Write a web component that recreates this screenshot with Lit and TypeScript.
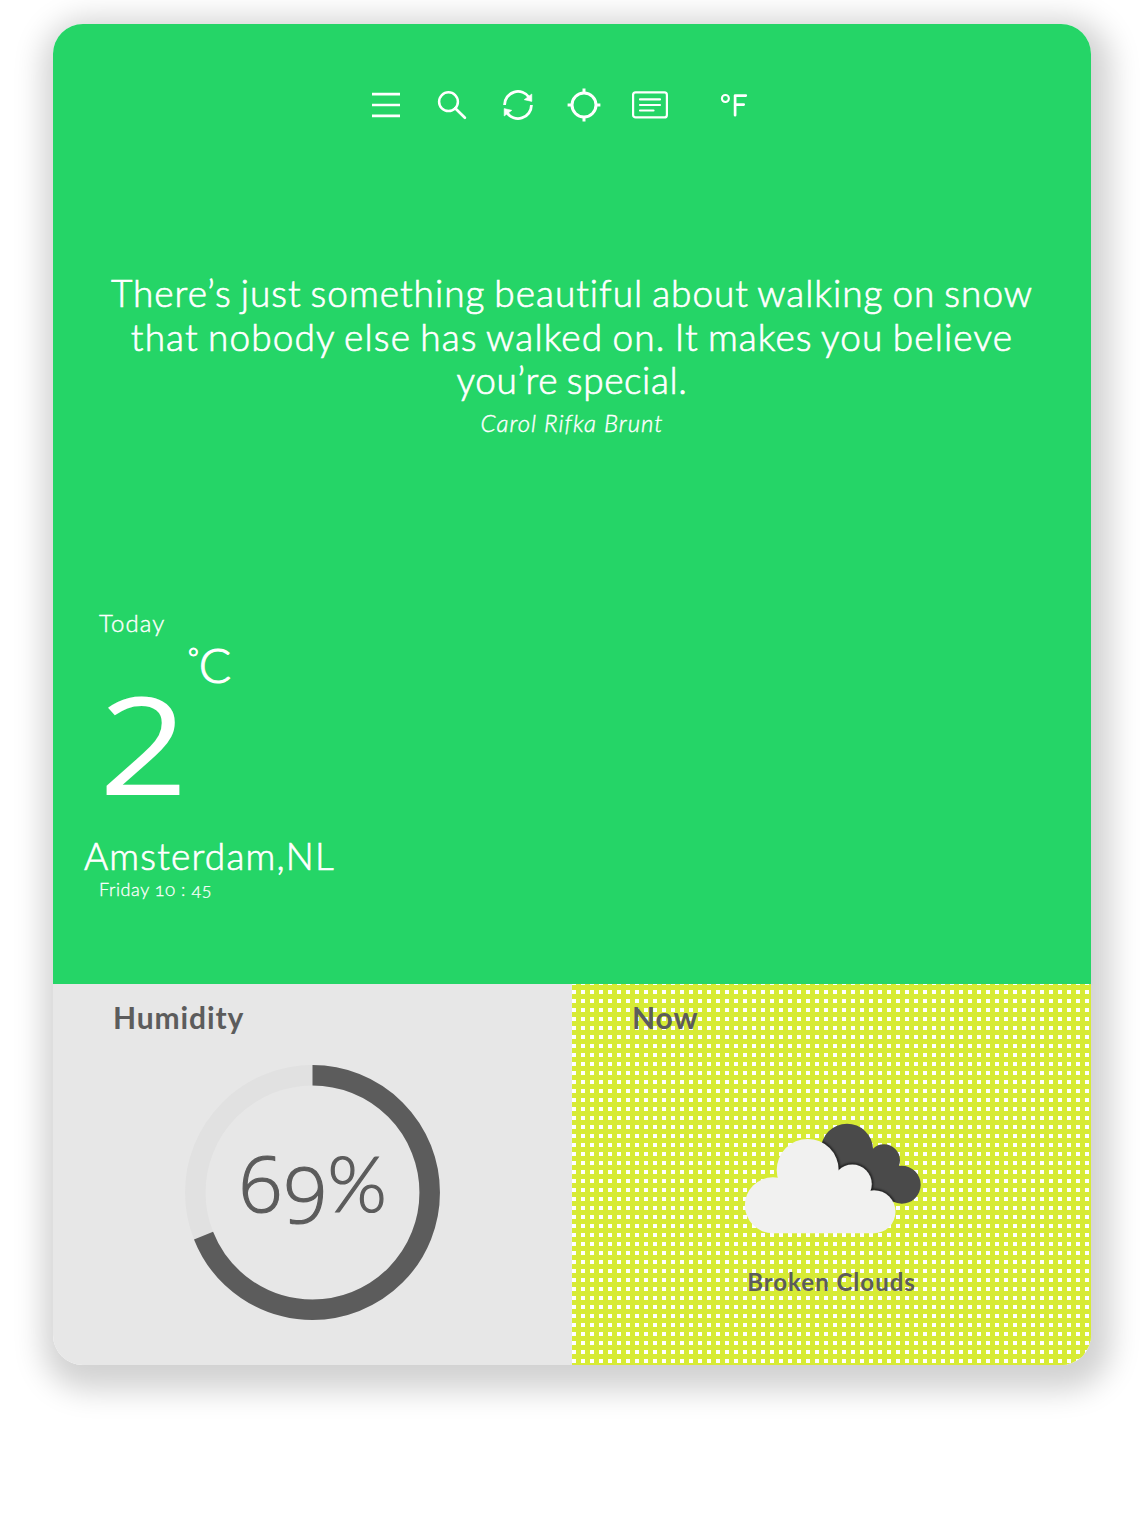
import { LitElement, html, css, svg } from "lit";
import { customElement, property } from "lit/decorators.js";

@customElement("humidity-ring")
class HumidityRing extends LitElement {
  @property({ type: Number }) value = 0;
  static styles = css`
    :host { display: grid; width: 256px; height: 256px; place-items: center; }
    svg, .label { grid-area: 1 / 1; }
    .label {
      display: flex; align-items: baseline; color: #5c5c5c; margin: -44px 0 0 -1px;
      font: 300 78px/78px "Open Sans", sans-serif; -webkit-text-stroke: 1.2px #5c5c5c;
    }
    .low { padding-top: 22px; margin-bottom: -22px; transform: translateY(11px); }
    .pct { font: 300 76px/78px Lato, sans-serif; -webkit-text-stroke: 1.2px #5c5c5c; }
  `;
  render() {
    const digits = String(this.value).split("");
    return html`
      <svg width="256" height="256" viewBox="0 0 256 256" fill="none" stroke-width="20.5">
        <circle cx="127.5" cy="127.5" r="117.2" stroke="#e1e1e1" />
        <circle cx="127.5" cy="127.5" r="117.2" stroke="#5c5c5c" pathLength="100"
          stroke-dasharray="${this.value} 100" transform="rotate(-90 127.5 127.5)" />
      </svg>
      <div class="label">${digits.map((d) => html`<span class=${"34579".includes(d) ? "low" : ""}>${d}</span>`)}<span class="pct">%</span></div>`;
  }
}

const icons = [
  svg`<path d="M6 9.2h28M6 20h28M6 30.9h28" stroke-width="2.7"/>`,
  svg`<circle cx="16.5" cy="16.7" r="9.4" stroke-width="2.5"/><path d="M23.2 23.3L32.9 32.7" stroke-width="2.7" stroke-linecap="round"/>`,
  svg`<path d="M6.6 20a13.4 13.4 0 0 1 24.6-7.5M33.4 20a13.4 13.4 0 0 1-24.6 7.5" stroke-width="2.8"/><path d="M33.8 9v7.4l-7.6-1.7zM6.2 31v-7.4l7.6 1.7z" fill="#fff" stroke-width="0.6"/>`,
  svg`<circle cx="20" cy="20" r="12" stroke-width="3"/><path d="M20 3.6v5M20 31.4v5M3.6 20h5M31.4 20h5" stroke-width="3"/>`,
  svg`<rect x="3.1" y="7.4" width="33.8" height="25" rx="2.5" stroke-width="2.2"/><path d="M10 14.4h20M10 20h20M10 25.5h13.5" stroke-width="2.2" stroke-linecap="round"/>`,
];

const frontCloud = svg`<circle cx="64.7" cy="48" r="31"/><circle cx="109.3" cy="62" r="19.5"/><circle cx="131" cy="89.7" r="21.5"/><circle cx="29.9" cy="83.3" r="28"/><path d="M29.9 60h80l21 20v31.3H29.9z"/>`;

@customElement("app-root")
class AppRoot extends LitElement {
  static styles = css`
    :host {
      display: block; box-sizing: border-box; height: 1526px; padding: 24px 53px 0;
      background: #fff; font-family: Lato, "Open Sans", sans-serif; font-weight: 300;
      font-variant-numeric: oldstyle-nums; color: #fff;
    }
    .card {
      height: 1341px; border-radius: 30px; overflow: hidden;
      display: grid; grid-template-rows: 960px 381px;
      box-shadow: 5px 10px 30px 15px #d2d2d2;
    }
    .hero { background: #25d567; display: flex; flex-direction: column; }
    .tools { display: flex; gap: 26px; padding: 61px 0 0 313px; height: 40px; }
    .tools svg { width: 40px; height: 40px; fill: none; stroke: #fff; }
    .unit { margin-left: 20px; }
    .quote {
      margin: 146px 0 0; text-align: center; font-size: 37px; line-height: 43.6px;
      height: 131px; word-spacing: -2px; -webkit-text-stroke: 0.7px #fff;
    }
    .q { display: block; white-space: nowrap; }
    .q1 { letter-spacing: 0.98px; } .q2 { letter-spacing: 1.14px; } .q3 { letter-spacing: 0.6px; }
    .author {
      font-size: 24px; line-height: 30px; margin-top: 6px; text-align: center;
      font-style: italic; letter-spacing: 1px; -webkit-text-stroke: 0.4px #fff;
    }
    .weather { padding-left: 31px; margin-top: 170px; display: flex; flex-direction: column; align-items: flex-start; }
    .today { font-size: 24px; line-height: 30px; margin-left: 15px; letter-spacing: 1.1px; -webkit-text-stroke: 0.4px #fff; }
    .temp { display: flex; height: 196px; margin-left: 15px; }
    .num {
      width: 89px; height: 120px; margin-top: 45px; font: 400 135px/120px "Open Sans", sans-serif;
      transform: scaleX(1.15); transform-origin: 0 0;
    }
    .deg { display: flex; align-items: flex-start; font-size: 48px; line-height: 54px; -webkit-text-stroke: 1px #fff; }
    .ring { font-size: 26px; line-height: 36px; margin-top: 1px; }
    .city { font-size: 37px; line-height: 44px; letter-spacing: 1.2px; -webkit-text-stroke: 0.7px #fff; }
    .time { font-size: 18px; line-height: 22px; margin-left: 15px; letter-spacing: 0.6px; -webkit-text-stroke: 0.3px #fff; }
    .panels { display: grid; grid-template-columns: 519px 519px; color: #5c5c5c; font-weight: 700; }
    .panel { display: flex; flex-direction: column; }
    .humidity { background: #e7e7e7; }
    .now {
      background-color: #fff;
      background-image: linear-gradient(#d7eb35 5px, transparent 5px), linear-gradient(90deg, #d7eb35 5px, transparent 5px);
      background-size: 9px 9px; background-position: 0 1px, 4px 0;
    }
    .title { font-size: 30px; line-height: 36px; margin: 15px 0 0 60px; letter-spacing: 0.9px; }
    humidity-ring { margin: 30px 0 0 132px; }
    .clouds { width: 180px; height: 114px; margin: 87px 0 0 171px; }
    .cond { width: 519px; text-align: center; font-size: 24px; line-height: 30px; margin-top: 31px; letter-spacing: 1px; }
  `;
  render() {
    return html`
      <div class="card">
        <section class="hero">
          <nav class="tools">
            ${icons.map((i) => html`<svg viewBox="0 0 40 40">${i}</svg>`)}
            <svg class="unit" viewBox="0 0 40 40"><circle cx="9.4" cy="13.5" r="3.5" stroke-width="2.1"/><path d="M29.8 10.6H19.1v19.6M19.1 19.6h8.6" stroke-width="2.7" stroke-linecap="round" stroke-linejoin="round"/></svg>
          </nav>
          <p class="quote">
            <span class="q q1">There’s just something beautiful about walking on snow</span>
            <span class="q q2">that nobody else has walked on. It makes you believe</span>
            <span class="q q3">you’re special.</span>
          </p>
          <div class="author">Carol Rifka Brunt</div>
          <div class="weather">
            <div class="today">Today</div>
            <div class="temp"><span class="num">2</span><div class="deg"><span class="ring">°</span><span>C</span></div></div>
            <div class="city">Amsterdam,NL</div>
            <div class="time">Friday 10 : 45</div>
          </div>
        </section>
        <section class="panels">
          <div class="panel humidity">
            <div class="title">Humidity</div>
            <humidity-ring .value=${69}></humidity-ring>
          </div>
          <div class="panel now">
            <div class="title">Now</div>
            <svg class="clouds" viewBox="0 0 180 114">
              <defs>
                <filter id="soft" x="-10%" y="-10%" width="120%" height="120%"><feGaussianBlur stdDeviation="1.8"/></filter>
                <clipPath id="back"><circle cx="104" cy="27.7" r="26"/><circle cx="141" cy="38.3" r="16"/><circle cx="158.7" cy="62.7" r="19"/><path d="M80 30h60l10 15v36.7h8.7H115L80 50z"/></clipPath>
              </defs>
              <g clip-path="url(#back)">
                <rect width="180" height="114" fill="#4a4a4a"/>
                <g filter="url(#soft)" fill="#111" stroke="#111" stroke-width="1.5">${frontCloud}</g>
              </g>
              <g fill="#f1f1f0">${frontCloud}</g>
            </svg>
            <div class="cond">Broken Clouds</div>
          </div>
        </section>
      </div>`;
  }
}
